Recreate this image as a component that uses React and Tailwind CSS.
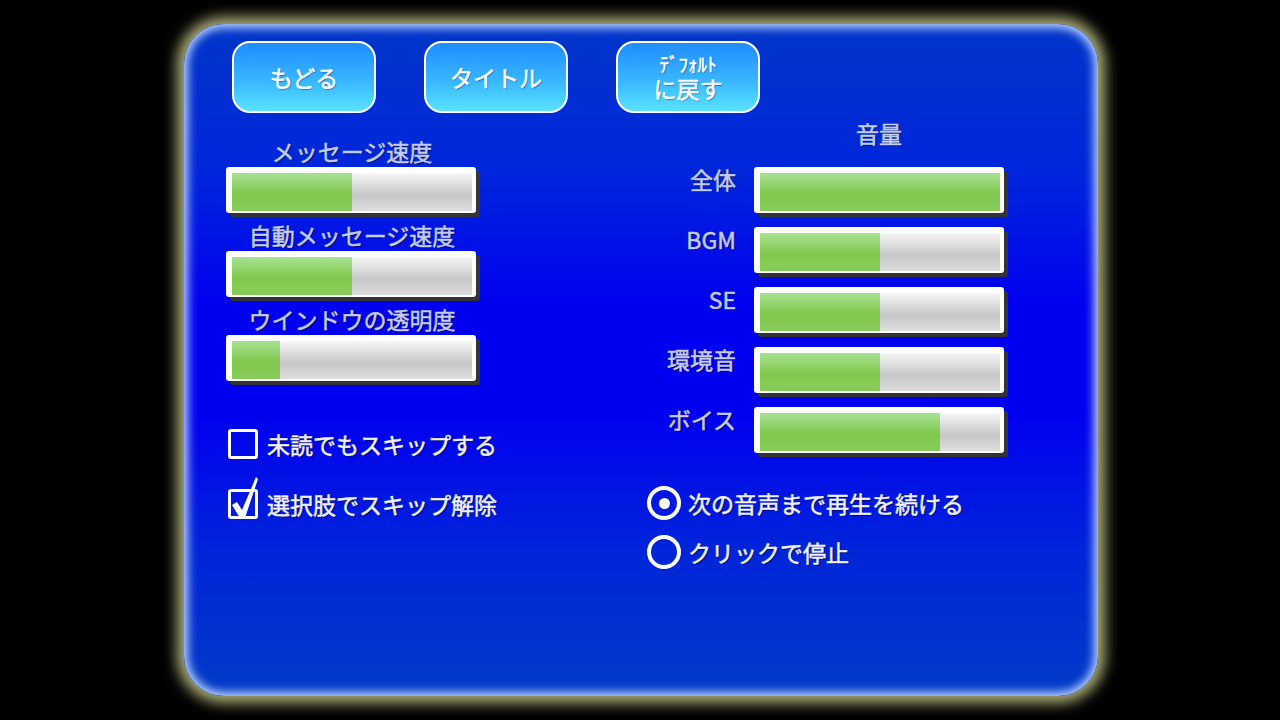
import React from 'react';

const font = { fontFamily: '"Noto Sans CJK JP", "Noto Sans", sans-serif' };

const leftSliders = [
  { label: 'メッセージ速度', value: 50 },
  { label: '自動メッセージ速度', value: 50 },
  { label: 'ウインドウの透明度', value: 20 },
];

const volumes = [
  { label: '全体', value: 100 },
  { label: 'BGM', value: 50 },
  { label: 'SE', value: 50 },
  { label: '環境音', value: 50 },
  { label: 'ボイス', value: 75 },
];

function Bar({ value }) {
  return (
    <div className="h-[46px] w-[250px] shrink-0 rounded-[3px] bg-white pt-[6px] pl-[6px] pr-[4px] pb-[2px] shadow-[4px_4px_0_#333333]">
      <div className="h-full w-full bg-[linear-gradient(#f6f6f6,#c6c6c6_60%,#dedede)]">
        <div
          className="h-full bg-[linear-gradient(#a8e294,#7fc84c_55%,#88cc5a)]"
          style={{ width: `${value}%` }}
        />
      </div>
    </div>
  );
}

function TopButton({ children }) {
  return (
    <button className="flex h-[72px] w-[144px] flex-col items-center justify-center rounded-[18px] border-2 border-white bg-[linear-gradient(#1f8cff,#38b6ff_55%,#58e2ff)] text-[23px] leading-[26px] text-white [-webkit-text-stroke:0.5px_currentColor] [text-shadow:1px_1px_1px_rgba(0,40,120,0.5)]">
      {children}
    </button>
  );
}

function Checkbox({ checked, label }) {
  return (
    <div className="flex h-[30px] items-center">
      <div className="relative h-[30px] w-[30px] rounded-[3px] border-[3px] border-white">
        {checked && (
          <svg className="absolute left-[-3px] top-[-16px]" width="34" height="46" viewBox="0 0 34 46">
            <polygon points="4,29 9,26 14,34 28,1 30,3 17,42 12,42" fill="white" />
          </svg>
        )}
      </div>
      <span className="ml-[9px] text-[23px] leading-[26px] text-[#eef0ff] [-webkit-text-stroke:0.5px_currentColor] [text-shadow:1px_1px_1px_rgba(0,0,60,0.7)]">
        {label}
      </span>
    </div>
  );
}

function Radio({ checked, label }) {
  return (
    <div className="flex h-[34px] items-center">
      <div className="flex h-[34px] w-[34px] items-center justify-center rounded-full border-[4px] border-white">
        {checked && <div className="h-[11px] w-[11px] rounded-full bg-white" />}
      </div>
      <span className="ml-[7px] text-[23px] leading-[26px] text-[#eef0ff] [-webkit-text-stroke:0.5px_currentColor] [text-shadow:1px_1px_1px_rgba(0,0,60,0.7)]">
        {label}
      </span>
    </div>
  );
}

const labelCls =
  'text-[23px] leading-[24px] text-[#c4ccee] [-webkit-text-stroke:0.5px_currentColor] [text-shadow:1px_1px_1px_rgba(0,0,60,0.7)]';

export default function App() {
  return (
    <div className="flex h-[720px] w-[1280px] items-center justify-center overflow-hidden bg-black" style={font}>
      <div className="ml-[2px] h-[672px] w-[914px] rounded-[40px] bg-[linear-gradient(#0036c8_0%,#0026dc_22%,#0000f0_42%,#0000f0_58%,#0024da_78%,#003cc6_100%)] pt-[17px] shadow-[0_0_14px_7px_rgba(232,232,160,0.75),inset_0_0_10px_4px_rgba(195,218,255,0.95)]">
        {/* top buttons */}
        <div className="flex gap-[48px] pl-[48px]">
          <TopButton>もどる</TopButton>
          <TopButton>タイトル</TopButton>
          <TopButton>
            <span className="text-[19px] leading-[22px]">ﾃﾞﾌｫﾙﾄ</span>
            <span>に戻す</span>
          </TopButton>
        </div>

        <div className="flex pl-[42px]">
          {/* left column */}
          <div className="w-[421px] pt-[26px]">
            {leftSliders.map((s) => (
              <div key={s.label} className="mb-[10px] w-[252px]">
                <div className={`text-center ${labelCls}`}>{s.label}</div>
                <div className="mt-[4px]">
                  <Bar value={s.value} />
                </div>
              </div>
            ))}
            <div className="mt-[48px] pl-[2px]">
              <Checkbox label="未読でもスキップする" />
              <div className="mt-[30px]">
                <Checkbox checked label="選択肢でスキップ解除" />
              </div>
            </div>
          </div>

          {/* right column */}
          <div className="pt-[8px]">
            <div className="flex">
              <div className="w-[107px]" />
              <div className={`w-[250px] text-center ${labelCls}`}>音量</div>
            </div>
            <div className="mt-[22px] flex flex-col gap-[14px]">
              {volumes.map((v) => (
                <div key={v.label} className="flex">
                  <div className={`w-[89px] text-right ${labelCls}`}>{v.label}</div>
                  <div className="ml-[18px]">
                    <Bar value={v.value} />
                  </div>
                </div>
              ))}
            </div>
            <div className="mt-[33px]">
              <Radio checked label="次の音声まで再生を続ける" />
              <div className="mt-[15px]">
                <Radio label="クリックで停止" />
              </div>
            </div>
          </div>
        </div>
      </div>
    </div>
  );
}
